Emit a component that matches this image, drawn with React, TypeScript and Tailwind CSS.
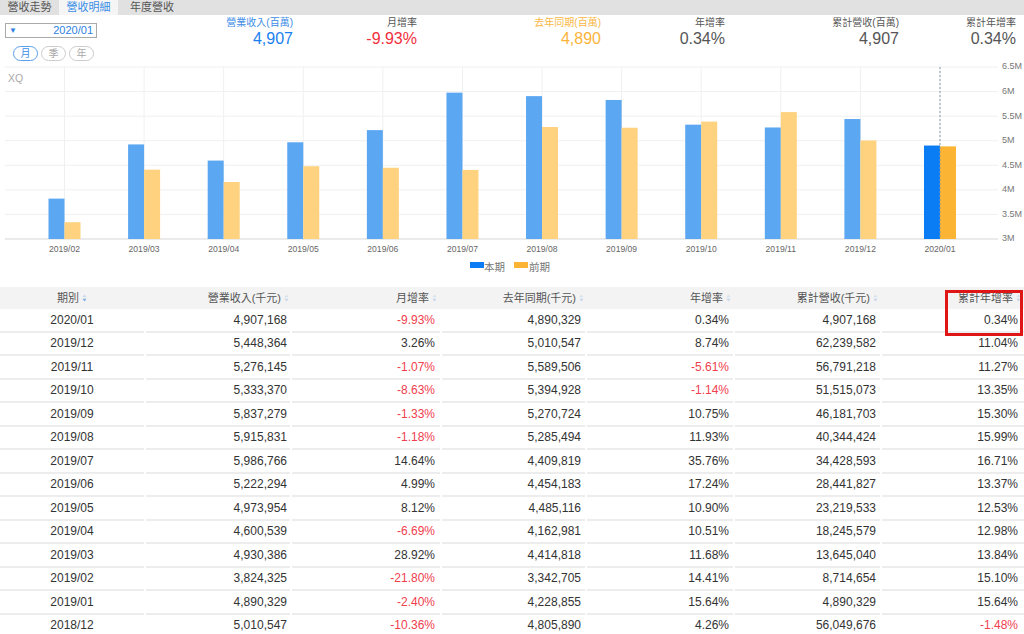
import React from "react";

const font = "font-['Liberation_Sans','Noto_Sans_CJK_TC',sans-serif]";

const bars = [
  { m: "2019/02", a: 3.824325, b: 3.342705 },
  { m: "2019/03", a: 4.930386, b: 4.414818 },
  { m: "2019/04", a: 4.600539, b: 4.162981 },
  { m: "2019/05", a: 4.973954, b: 4.485116 },
  { m: "2019/06", a: 5.222294, b: 4.454183 },
  { m: "2019/07", a: 5.986766, b: 4.409819 },
  { m: "2019/08", a: 5.915831, b: 5.285494 },
  { m: "2019/09", a: 5.837279, b: 5.270724 },
  { m: "2019/10", a: 5.33337, b: 5.394928 },
  { m: "2019/11", a: 5.276145, b: 5.589506 },
  { m: "2019/12", a: 5.448364, b: 5.010547 },
  { m: "2020/01", a: 4.907168, b: 4.890329 },
];

const rows = [
  ["2020/01", "4,907,168", "-9.93%", "4,890,329", "0.34%", "4,907,168", "0.34%"],
  ["2019/12", "5,448,364", "3.26%", "5,010,547", "8.74%", "62,239,582", "11.04%"],
  ["2019/11", "5,276,145", "-1.07%", "5,589,506", "-5.61%", "56,791,218", "11.27%"],
  ["2019/10", "5,333,370", "-8.63%", "5,394,928", "-1.14%", "51,515,073", "13.35%"],
  ["2019/09", "5,837,279", "-1.33%", "5,270,724", "10.75%", "46,181,703", "15.30%"],
  ["2019/08", "5,915,831", "-1.18%", "5,285,494", "11.93%", "40,344,424", "15.99%"],
  ["2019/07", "5,986,766", "14.64%", "4,409,819", "35.76%", "34,428,593", "16.71%"],
  ["2019/06", "5,222,294", "4.99%", "4,454,183", "17.24%", "28,441,827", "13.37%"],
  ["2019/05", "4,973,954", "8.12%", "4,485,116", "10.90%", "23,219,533", "12.53%"],
  ["2019/04", "4,600,539", "-6.69%", "4,162,981", "10.51%", "18,245,579", "12.98%"],
  ["2019/03", "4,930,386", "28.92%", "4,414,818", "11.68%", "13,645,040", "13.84%"],
  ["2019/02", "3,824,325", "-21.80%", "3,342,705", "14.41%", "8,714,654", "15.10%"],
  ["2019/01", "4,890,329", "-2.40%", "4,228,855", "15.64%", "4,890,329", "15.64%"],
  ["2018/12", "5,010,547", "-10.36%", "4,805,890", "4.26%", "56,049,676", "-1.48%"],
];

const cols = [
  { label: "期別", w: "w-[144px]", cell: "justify-center", head: "justify-center" },
  { label: "營業收入(千元)", w: "w-[144px]", cell: "justify-end pr-[3px]", head: "justify-end pr-[1px]" },
  { label: "月增率", w: "w-[148px]", cell: "justify-end pr-[5px]", head: "justify-end pr-[3px]" },
  { label: "去年同期(千元)", w: "w-[143px]", cell: "justify-end pr-[4px]", head: "justify-end pr-[1px]" },
  { label: "年增率", w: "w-[146px]", cell: "justify-end pr-[4px]", head: "justify-end pr-[2px]" },
  { label: "累計營收(千元)", w: "w-[145px]", cell: "justify-end pr-[4px]", head: "justify-end pr-[2px]" },
  { label: "累計年增率", w: "w-[142px]", cell: "justify-end pr-[6px]", head: "justify-end pr-[3px]" },
];

const stats = [
  { label: "營業收入(百萬)", value: "4,907", w: "w-[193px]", lc: "text-[#3b8be6]", vc: "text-[#1a7ff0]" },
  { label: "月增率", value: "-9.93%", w: "w-[124px]", lc: "text-[#555]", vc: "text-[#f0303e]" },
  { label: "去年同期(百萬)", value: "4,890", w: "w-[184px]", lc: "text-[#f9b744]", vc: "text-[#fbb43a]" },
  { label: "年增率", value: "0.34%", w: "w-[124px]", lc: "text-[#555]", vc: "text-[#555]" },
  { label: "累計營收(百萬)", value: "4,907", w: "w-[174px]", lc: "text-[#555]", vc: "text-[#555]" },
  { label: "累計年增率", value: "0.34%", w: "w-[117px]", lc: "text-[#555]", vc: "text-[#555]" },
];

function SortIcon({ active }: { active?: boolean }) {
  return (
    <svg width="5" height="8" viewBox="0 0 5 8" className="ml-[3px]">
      <path d="M2.5 0.5 L4.6 3.2 L0.4 3.2 Z" fill={active ? "#c9d8ea" : "#d6e2ef"} />
      <path d="M2.5 7.5 L4.6 4.8 L0.4 4.8 Z" fill={active ? "#7fb0e2" : "#c6d7ea"} />
    </svg>
  );
}

function Chart() {
  const y = (v: number) => 177 - (v - 3) * 49;
  const ticks = ["6.5M", "6M", "5.5M", "5M", "4.5M", "4M", "3.5M", "3M"];
  const cx = (i: number) => 64.5 + i * 79.59;
  return (
    <svg width="1024" height="225" viewBox="0 0 1024 225" className="block">
      {ticks.map((t, i) => (
        <g key={t}>
          <line x1="5" x2="998" y1={5 + i * 24.57} y2={5 + i * 24.57} stroke={i === 7 ? "#d6d6d6" : "#f0f0f0"} strokeWidth="1" />
          <text x="1002" y={5 + i * 24.57} dominantBaseline="middle" fontSize="9" fill="#777">
            {t}
          </text>
        </g>
      ))}
      {bars.map((b, i) => (
        <line key={b.m} x1={cx(i)} x2={cx(i)} y1="5" y2="177" stroke="#f0f0f0" strokeWidth="1" />
      ))}
      <text x="8" y="17" dominantBaseline="middle" fontSize="10.5" fill="#aaa">
        XQ
      </text>
      {bars.map((b, i) => {
        const last = i === bars.length - 1;
        return (
          <g key={b.m + "b"}>
            <rect x={cx(i) - 16} y={y(b.a)} width="16" height={177 - y(b.a)} fill={last ? "#0a7cf4" : "#5ca7f2"} />
            <rect x={cx(i)} y={y(b.b)} width="16" height={177 - y(b.b)} fill={last ? "#fbb434" : "#fed27f"} />
            <text x={cx(i)} y="188" textAnchor="middle" dominantBaseline="middle" fontSize="8.6" fill="#666">
              {b.m}
            </text>
          </g>
        );
      })}
      <line x1={cx(11)} x2={cx(11)} y1="5" y2="177" stroke="#8a96a8" strokeWidth="1" strokeDasharray="2 2" />
      <rect x="470" y="200" width="14" height="6" fill="#0a7cf4" />
      <text x="484" y="206" dominantBaseline="middle" fontSize="10.5" fill="#777">
        本期
      </text>
      <rect x="514" y="200" width="14" height="6" fill="#fbb434" />
      <text x="529" y="206" dominantBaseline="middle" fontSize="10.5" fill="#777">
        前期
      </text>
    </svg>
  );
}

export default function App() {
  return (
    <div className={`relative w-[1024px] h-[634px] overflow-hidden bg-white ${font}`}>
      <div className="flex h-[15px] bg-[#e1e1e1] text-[11px] leading-[15px]">
        <div className="w-[59px] text-center text-[#555]">營收走勢</div>
        <div className="w-[59px] text-center bg-[#f5f5f5] text-[#3a8ee6]">營收明細</div>
        <div className="pl-[12px] text-[#555]">年度營收</div>
      </div>

      <div className="flex h-[47px] items-start">
        <div className="w-[100px] pl-[5px]">
          <div className="mt-[8px] flex h-[15px] w-[92px] items-center justify-between border border-[#aaa] px-[3px] text-[11px] leading-none text-[#2d7fe0]">
            <span className="text-[8px]">▼</span>
            <span>2020/01</span>
          </div>
          <div className="mt-[8px] flex gap-[3px] pl-[8px]">
            <div className="flex h-[15px] w-[25px] items-center justify-center rounded-full border border-[#5b9fe8] text-[10px] text-[#3a8ee6]">月</div>
            <div className="flex h-[15px] w-[25px] items-center justify-center rounded-full border border-[#ccc] text-[10px] text-[#aaa]">季</div>
            <div className="flex h-[15px] w-[25px] items-center justify-center rounded-full border border-[#ccc] text-[10px] text-[#aaa]">年</div>
          </div>
        </div>
        {stats.map((s) => (
          <div key={s.label} className={`${s.w} pt-[1px] text-right`}>
            <div className={`text-[10px] leading-[14px] ${s.lc}`}>{s.label}</div>
            <div className={`text-[16px] leading-[18px] ${s.vc}`}>{s.value}</div>
          </div>
        ))}
      </div>

      <Chart />

      <div className="flex h-[22px] gap-x-[2px] bg-[#f3f3f3] text-[11px] text-[#555]">
        {cols.map((c, i) => (
          <div key={c.label} className={`${c.w} flex items-center ${c.head}`}>
            <span>{c.label}</span>
            <SortIcon active={i === 0} />
          </div>
        ))}
      </div>

      {rows.map((r) => (
        <div key={r[0]} className="flex h-[23.5px] gap-x-[2px] text-[12px] text-[#333]">
          {r.map((v, i) => (
            <div
              key={i}
              className={`${cols[i].w} flex items-center border-b-2 border-[#ededed] ${cols[i].cell} ${
                v.startsWith("-") ? "text-[#f0404e]" : ""
              }`}
            >
              {v}
            </div>
          ))}
        </div>
      ))}

      <div className="absolute left-[945px] top-[290px] h-[46px] w-[78px] border-[3px] border-[#e01515]" />
    </div>
  );
}
